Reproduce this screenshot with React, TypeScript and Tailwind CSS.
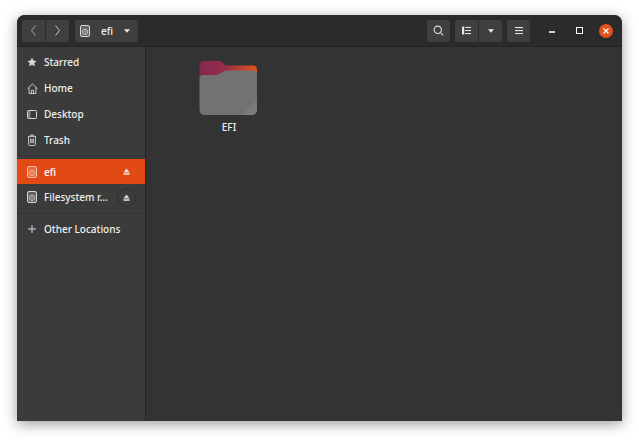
const font = { fontFamily: '"Noto Sans", sans-serif' };

function DriveIcon({ className = "text-[#d8d8d8]" }: { className?: string }) {
  return (
    <svg className={`h-[12px] w-[10px] shrink-0 ${className}`} viewBox="0 0 10 12" fill="none" stroke="currentColor">
      <rect x="0.5" y="0.5" width="9" height="11" rx="1.5" fill="currentColor" fillOpacity="0.25" />
      <circle cx="5" cy="6.8" r="2.6" strokeWidth="0.9" />
      <circle cx="5" cy="6.8" r="0.8" fill="currentColor" stroke="none" />
    </svg>
  );
}

function Eject({ className = "text-[#d8d8d8]" }: { className?: string }) {
  return (
    <svg className={`h-[7px] w-[7px] ${className}`} viewBox="0 0 8 8" fill="currentColor">
      <path d="M4 0.5 7.5 5H.5z" />
      <rect x="0.5" y="6" width="7" height="1.8" />
    </svg>
  );
}

function Row({ icon, label, className = "" }: { icon: React.ReactNode; label: string; className?: string }) {
  return (
    <div className={`flex h-[26px] items-center ${className}`}>
      <div className="flex w-[27px] shrink-0 justify-center pl-[3px]">{icon}</div>
      <span className="pt-px text-[10px] font-medium text-[#f0f0f0]">{label}</span>
    </div>
  );
}

const StarIcon = (
  <svg className="h-[10px] w-[10px] text-[#d8d8d8]" viewBox="0 0 12 12" fill="currentColor">
    <path d="M6 .6 7.7 4.2l3.9.5-2.9 2.6.8 3.9L6 9.3l-3.5 1.9.8-3.9L.4 4.7l3.9-.5z" />
  </svg>
);

const HomeIcon = (
  <svg className="h-[11px] w-[11px] text-[#d8d8d8]" viewBox="0 0 12 12" fill="none" stroke="currentColor">
    <path d="M.6 6.2 6 1l5.4 5.2M2.3 5v6.5h7.4V5M4.8 11.5V8h2.4v3.5" />
  </svg>
);

const DesktopIcon = (
  <svg className="h-[9px] w-[10px] text-[#d8d8d8]" viewBox="0 0 10 9" fill="none" stroke="currentColor">
    <rect x="0.5" y="0.5" width="9" height="8" rx="1" />
    <rect x="1" y="1" width="2.5" height="7" fill="currentColor" fillOpacity="0.45" stroke="none" />
  </svg>
);

const TrashIcon = (
  <svg className="h-[12px] w-[10px] text-[#d8d8d8]" viewBox="0 0 11 13" fill="none" stroke="currentColor">
    <path d="M1 2.5h9M4 2.5V1h3v1.5M1.8 2.5v9.2c0 .5.3.8.8.8h5.8c.5 0 .8-.3.8-.8V2.5M4 5v5M5.5 5v5M7 5v5" />
  </svg>
);

export default function App() {
  return (
    <div className="h-[440px] w-[639px] overflow-hidden bg-white pl-[17px] pt-[15px]" style={font}>
      <div className="flex h-[406px] w-[605px] flex-col overflow-hidden rounded-t-[8px] bg-[#333333] shadow-[0_3px_14px_rgba(0,0,0,0.4)]">
        {/* header bar */}
        <header className="flex h-[32px] shrink-0 items-center border-b border-[#252525] bg-[#2b2b2b] pl-[5px] pr-[9px]">
          <div className="flex h-[22px] w-[47px] rounded-[3px] bg-[#3f3f3f]">
            <button className="flex w-[24px] items-center justify-center border-r border-[#2b2b2b]">
              <svg className="h-[11px] w-[7px] text-[#a8a8a8]" viewBox="0 0 7 11" fill="none" stroke="currentColor">
                <path d="M5.5.5 1.5 5.5l4 5" />
              </svg>
            </button>
            <button className="flex flex-1 items-center justify-center">
              <svg className="h-[11px] w-[7px] text-[#c8c8c8]" viewBox="0 0 7 11" fill="none" stroke="currentColor">
                <path d="M1.5.5l4 5-4 5" />
              </svg>
            </button>
          </div>
          <div className="ml-[6px] flex h-[22px] w-[63px] items-center rounded-[3px] bg-[#3f3f3f] pl-[5px]">
            <DriveIcon />
            <span className="ml-[11px] pt-px text-[10px] font-medium text-[#f0f0f0]">efi</span>
            <svg className="ml-[11px] h-[4px] w-[6px] text-[#ebebeb]" viewBox="0 0 7 4" fill="currentColor">
              <path d="M0 0h7L3.5 4z" />
            </svg>
          </div>

          <div className="ml-auto flex h-[22px] w-[23px] items-center justify-center rounded-[3px] bg-[#3f3f3f]">
            <svg className="h-[11px] w-[11px] text-[#dcdcdc]" viewBox="0 0 12 12" fill="none" stroke="currentColor" strokeWidth="1.2">
              <circle cx="5.2" cy="5.2" r="4" />
              <path d="m8.2 8.2 3 3" />
            </svg>
          </div>
          <div className="ml-[5px] flex h-[22px] w-[47px] rounded-[3px] bg-[#3f3f3f]">
            <div className="flex w-[24px] items-center justify-center border-r border-[#2b2b2b]">
              <svg className="h-[9px] w-[9px] text-[#e4e4e4]" viewBox="0 0 10 10" fill="currentColor">
                <rect x="0" y="0.5" width="2.5" height="9" rx="0.6" />
                <rect x="3.5" y="1" width="6.5" height="1.2" />
                <rect x="3.5" y="4.4" width="6.5" height="1.2" />
                <rect x="3.5" y="7.8" width="6.5" height="1.2" />
              </svg>
            </div>
            <div className="flex flex-1 items-center justify-center">
              <svg className="h-[4px] w-[6px] text-[#ebebeb]" viewBox="0 0 7 4" fill="currentColor">
                <path d="M0 0h7L3.5 4z" />
              </svg>
            </div>
          </div>
          <div className="ml-[5px] flex h-[22px] w-[23px] items-center justify-center rounded-[3px] bg-[#3f3f3f]">
            <svg className="h-[7px] w-[8px] text-[#e4e4e4]" viewBox="0 0 8 7" fill="currentColor">
              <rect y="0" width="8" height="1.1" />
              <rect y="3" width="8" height="1.1" />
              <rect y="6" width="8" height="1.1" />
            </svg>
          </div>
          <div className="ml-[16px] flex w-[11px] justify-center">
            <div className="mt-[3px] h-[2px] w-[6px] bg-[#d4d4d4]" />
          </div>
          <div className="ml-[16px] flex w-[12px] justify-center">
            <div className="h-[7px] w-[7px] border-[1.5px] border-white" />
          </div>
          <div className="ml-[14px] flex h-[14px] w-[14px] items-center justify-center rounded-full bg-[#e2501b]">
            <svg className="h-[6px] w-[6px] text-white" viewBox="0 0 6 6" fill="none" stroke="currentColor" strokeWidth="1.3">
              <path d="m.5.5 5 5m0-5-5 5" />
            </svg>
          </div>
        </header>

        <div className="flex min-h-0 flex-1">
          {/* sidebar */}
          <aside className="flex w-[129px] shrink-0 flex-col border-r border-[#262626] bg-[#3b3b3b] pt-[2px]">
            <Row icon={StarIcon} label="Starred" />
            <Row icon={HomeIcon} label="Home" />
            <Row icon={DesktopIcon} label="Desktop" />
            <Row icon={TrashIcon} label="Trash" />
            <div className="mb-[3px] mt-[2px] h-px bg-[#343434]" />
            <div className="flex h-[25px] items-center bg-[#e24a15]">
              <div className="flex w-[27px] shrink-0 justify-center pl-[3px]">
                <DriveIcon className="text-[#f6c3ac]" />
              </div>
              <span className="pt-px text-[10px] font-medium text-white">efi</span>
              <div className="ml-auto mr-[15px]">
                <Eject className="text-[#f8dccf]" />
              </div>
            </div>
            <div className="flex h-[26px] items-center">
              <div className="flex w-[27px] shrink-0 justify-center pl-[3px]">
                <DriveIcon />
              </div>
              <span className="whitespace-nowrap pt-px text-[10px] font-medium text-[#f0f0f0]">Filesystem r…</span>
              <div className="ml-auto mr-[9px] flex h-[19px] w-[19px] items-center justify-center rounded-full border border-[#2e2e2e]">
                <Eject />
              </div>
            </div>
            <div className="mb-[2px] mt-[3px] h-px bg-[#343434]" />
            <Row
              icon={
                <svg className="h-[8px] w-[8px] text-[#d8d8d8]" viewBox="0 0 8 8" stroke="currentColor">
                  <path d="M4 0v8M0 4h8" />
                </svg>
              }
              label="Other Locations"
            />
          </aside>

          {/* file area */}
          <main className="flex-1 bg-[#333333] pl-[53px] pt-[14px]">
            <div className="flex w-[60px] flex-col items-center">
              <svg className="h-[56px] w-[60px]" viewBox="0 0 60 56">
                <defs>
                  <linearGradient id="tab" x1="0" x2="1" y1="0" y2="0">
                    <stop offset="0" stopColor="#84284f" />
                    <stop offset="0.45" stopColor="#992c49" />
                    <stop offset="1" stopColor="#e4551b" />
                  </linearGradient>
                </defs>
                <path d="M.5 5Q.5 0 5 0H19Q22 0 24 2L26 4.5H54Q58 4.5 58 9V20H.5z" fill="url(#tab)" />
                <path
                  d="M.5 18Q.5 14 4.5 14H17Q20 14 22 12L25 10Q26 9.5 28 9.5H54Q58 9.5 58 13V48Q58 54 52 54H6Q.5 54 .5 48z"
                  fill="#727272"
                />
                <path d="M58 39 43 54H52Q58 54 58 48z" fill="#7b7b7b" />
              </svg>
              <span className="mt-[3px] text-[10px] font-medium leading-[14px] text-[#f0f0f0]">EFI</span>
            </div>
          </main>
        </div>
      </div>
    </div>
  );
}
